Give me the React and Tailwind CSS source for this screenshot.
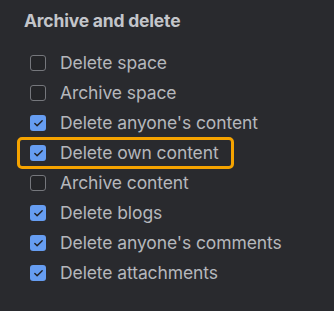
import { Check } from "lucide-react";

const items = [
  { label: "Delete space", checked: false },
  { label: "Archive space", checked: false },
  { label: "Delete anyone's content", checked: true },
  { label: "Delete own content", checked: true, focused: true },
  { label: "Archive content", checked: false },
  { label: "Delete blogs", checked: true },
  { label: "Delete anyone's comments", checked: true },
  { label: "Delete attachments", checked: true },
];

export default function App() {
  return (
    <div
      className="h-[311px] w-[334px] bg-[#292a2e] pt-[9px]"
      style={{ fontFamily: "Inter, 'Noto Sans', sans-serif" }}
    >
      <h3 className="pl-[24px] text-[17.5px] font-bold leading-[24px] tracking-[-0.2px] text-[#c3c5ca]">
        Archive and delete
      </h3>

      <ul className="mt-[15px] flex flex-col pl-[17px]">
        {items.map((item) => (
          <li
            key={item.label}
            className={`-my-px flex h-[32px] items-center gap-[14px] rounded-[5px] border-[3px] pl-[10px] pr-[12px] ${
              item.focused ? "w-fit border-[#f5a300]" : "border-transparent"
            }`}
          >
            {item.checked ? (
              <span className="flex h-[16px] w-[16px] shrink-0 items-center justify-center rounded-[3px] bg-[#669df1]">
                <Check className="h-[11px] w-[11px] text-[#1f1f21]" strokeWidth={3} />
              </span>
            ) : (
              <span className="h-[16px] w-[16px] shrink-0 rounded-[3px] border border-[#75777c] bg-[#242528]" />
            )}
            <span className="text-[17.5px] leading-[22px] tracking-[-0.1px] text-[#b5b7bc]">
              {item.label}
            </span>
          </li>
        ))}
      </ul>
    </div>
  );
}
